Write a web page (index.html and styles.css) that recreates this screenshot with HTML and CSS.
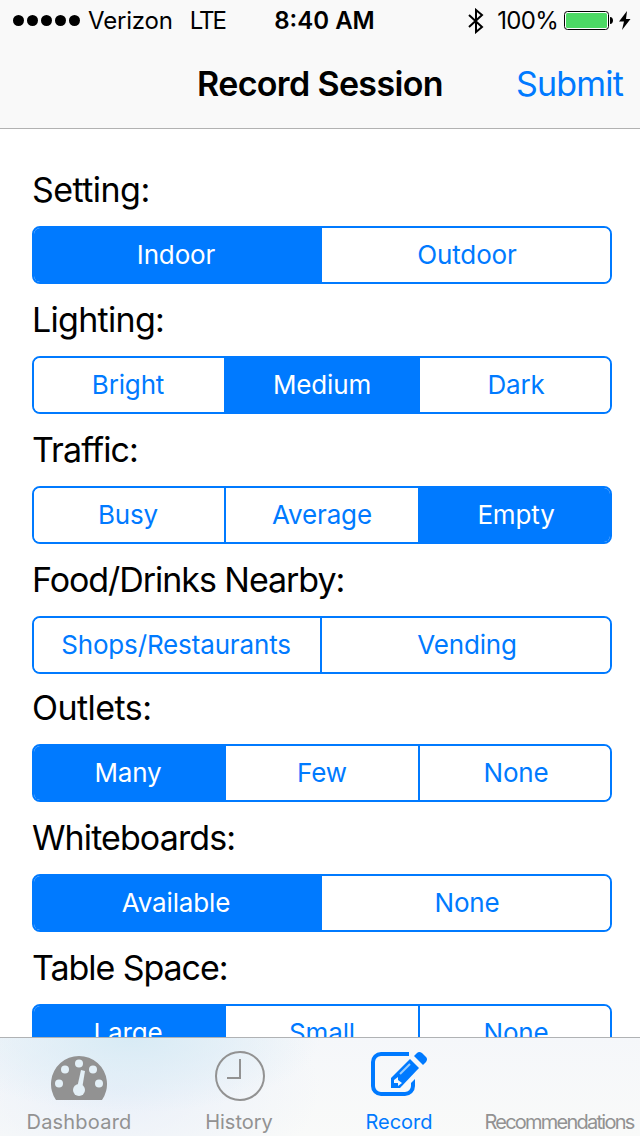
FILE: index.html
```
<!DOCTYPE html>
<html lang="en">
  <head>
    <meta charset="UTF-8" />
    <meta name="viewport" content="width=device-width, initial-scale=1.0" />
    <title>Record Session</title>
    <link rel="stylesheet" href="styles.css">
  </head>
  <body>
    <header class="top">
      <div class="status">
        <div class="status-left">
          <span class="signal"><i></i><i></i><i></i><i></i><i></i></span>
          <span class="carrier">Verizon</span>
          <span class="network">LTE</span>
        </div>
        <span class="time">8:40 AM</span>
        <div class="status-right">
          <svg class="bluetooth" width="16" height="26" viewBox="0 0 16 26">
            <path d="M1 7l13 12-6 5V2l6 5L1 19" fill="none" stroke="#000" stroke-width="2" />
          </svg>
          <span class="percent">100%</span>
          <svg class="battery" width="50" height="19" viewBox="0 0 50 19">
            <rect x="0.5" y="0.5" width="44" height="18" rx="3" fill="#fff" stroke="#000" />
            <rect x="2" y="2" width="41" height="15" rx="1.5" fill="#4cd964" />
            <path d="M46 6c4 0 4 7 0 7z" />
          </svg>
          <svg class="bolt" width="12" height="19" viewBox="0 0 12 19">
            <path d="M8 0L0 10.500h5L3 19l8.500-11H7z" />
          </svg>
        </div>
      </div>
      <nav class="navbar">
        <h1 class="title">Record Session</h1>
        <a class="submit">Submit</a>
      </nav>
    </header>

    <main class="form">
      <section class="group">
        <h2 class="label setting">Setting:</h2>
        <div class="segments two">
          <button class="selected">Indoor</button>
          <button>Outdoor</button>
        </div>
      </section>
      <section class="group">
        <h2 class="label lighting">Lighting:</h2>
        <div class="segments">
          <button>Bright</button>
          <button class="selected">Medium</button>
          <button>Dark</button>
        </div>
      </section>
      <section class="group">
        <h2 class="label traffic">Traffic:</h2>
        <div class="segments">
          <button>Busy</button>
          <button>Average</button>
          <button class="selected">Empty</button>
        </div>
      </section>
      <section class="group food-group">
        <h2 class="label food">Food/Drinks Nearby:</h2>
        <div class="segments two">
          <button>Shops/Restaurants</button>
          <button>Vending</button>
        </div>
      </section>
      <section class="group">
        <h2 class="label outlets">Outlets:</h2>
        <div class="segments">
          <button class="selected">Many</button>
          <button>Few</button>
          <button>None</button>
        </div>
      </section>
      <section class="group">
        <h2 class="label whiteboards">Whiteboards:</h2>
        <div class="segments two">
          <button class="selected">Available</button>
          <button>None</button>
        </div>
      </section>
      <section class="group">
        <h2 class="label table">Table Space:</h2>
        <div class="segments">
          <button class="selected">Large</button>
          <button>Small</button>
          <button>None</button>
        </div>
      </section>
    </main>

    <footer class="tabs">
      <a class="tab">
        <span class="icon">
          <svg width="56" height="50" viewBox="0 0 56 50">
            <path d="M5 49A28 28 0 1 1 51 49z" fill="#929292" />
            <g fill="#e4f0f7">
              <circle cx="28" cy="12.500" r="4" />
              <circle cx="14" cy="18.500" r="4" />
              <circle cx="42" cy="18.500" r="4" />
              <circle cx="8" cy="32.500" r="4" />
              <circle cx="48" cy="32.500" r="4" />
              <circle cx="28" cy="39" r="6" />
              <path d="M26 37l4-18 4 1-3 18z" />
            </g>
          </svg>
        </span>
        <span class="dashboard">Dashboard</span>
      </a>
      <a class="tab">
        <span class="icon history-icon">
          <svg width="50" height="50" viewBox="0 0 50 50" fill="none" stroke="#929292" stroke-width="2">
            <circle cx="25" cy="25" r="24" />
            <path d="M25 8v19H12" />
          </svg>
        </span>
        <span class="history">History</span>
      </a>
      <a class="tab active">
        <span class="icon">
          <svg width="56" height="50" viewBox="0 0 56 50">
            <path d="M38 3H10a8 8 0 0 0-8 8v24a8 8 0 0 0 8 8h24a8 8 0 0 0 8-8v-2" fill="none" stroke="#007aff" stroke-width="4" />
            <path d="M40 34v-2l4-4v6z" fill="#007aff" />
            <path d="M20 37V27L39 8l9 9-19 20z" fill="#007aff" />
            <path d="M43 5l3-3q2-2 5 0l4 4q2 2 0 5l-3 3z" fill="#007aff" />
            <path d="M23 29l4-3v3l4 3-4 3v-3h-4z" fill="#f6f8f9" />
            <path d="M29 23L39 13" stroke="#9accfc" stroke-width="2" />
          </svg>
        </span>
        <span class="record">Record</span>
      </a>
      <a class="tab">
        <span class="icon"></span>
        <span class="recommendations">Recommendations</span>
      </a>
    </footer>
  </body>
</html>
```
FILE: styles.css
```
* {
  box-sizing: border-box;
}

body {
  display: flex;
  flex-direction: column;
  width: 640px;
  height: 1136px;
  margin: 0;
  overflow: hidden;
  background-color: #fff;
  color: #000;
  font-family: Inter, "Liberation Sans", sans-serif;
}

.top {
  flex: none;
  height: 129px;
  background-color: #f9f9f9;
  border-bottom: 1px solid #b2b2b2;
}

.status {
  display: grid;
  grid-template-columns: 1fr auto 1fr;
  align-items: center;
  height: 40px;
  padding: 1px 9px 0 13px;
  font-size: 24px;
  white-space: nowrap;
}

.status-left,
.status-right {
  display: flex;
  align-items: center;
}

.status-right {
  justify-content: flex-end;
}

.signal {
  display: flex;
  gap: 3px;
  margin-right: 8px;
}

.signal i {
  width: 11px;
  height: 11px;
  border-radius: 50%;
  background-color: #000;
}

.carrier {
  margin-right: 17px;
  letter-spacing: -0.2px;
}

.network {
  letter-spacing: -2px;
}

.time {
  margin-left: 5px;
  font-weight: 600;
}

.bluetooth {
  margin-right: 13px;
}

.percent {
  letter-spacing: -0.7px;
}

.battery {
  margin: 0 5px 0 6px;
}

.navbar {
  display: grid;
  grid-template-columns: 1fr auto 1fr;
  align-items: center;
  height: 86px;
  padding: 0 17px;
  font-size: 34px;
}

.title {
  grid-column: 2;
  margin: 0;
  font-size: 34px;
  font-weight: 600;
  letter-spacing: -0.65px;
}

.submit {
  justify-self: end;
  color: #007aff;
  letter-spacing: -0.8px;
}

.form {
  flex: 1;
  min-height: 0;
  padding: 41px 28px 0 32px;
  overflow: hidden;
}

.group {
  margin-bottom: 16px;
}

.food-group {
  margin-bottom: 14px;
}

.label {
  margin: 0 0 16px;
  font-size: 34px;
  font-weight: 400;
  line-height: 40px;
  letter-spacing: -0.9px;
}

.setting,
.outlets {
  letter-spacing: -0.55px;
}

.lighting {
  letter-spacing: -0.7px;
}

.food,
.table {
  letter-spacing: -1.05px;
}

.segments {
  display: grid;
  grid-template-columns: 190px 194px 192px;
  height: 58px;
  border: 2px solid #007aff;
  border-radius: 8px;
  overflow: hidden;
}

.two {
  grid-template-columns: 286px 290px;
}

.segments button {
  padding: 0 0 2px;
  border: 0;
  background-color: #fff;
  color: #007aff;
  font-family: inherit;
  font-size: 26px;
  letter-spacing: -0.15px;
}

.segments button + button {
  border-left: 2px solid #007aff;
}

.segments button:first-child {
  padding-right: 2px;
}

.segments button:last-child {
  padding-left: 2px;
}

.segments .selected {
  background-color: #007aff;
  color: #fff;
}

.tabs {
  display: grid;
  grid-template-columns: 158px 162px 158px 162px;
  flex: none;
  height: 99px;
  border-top: 1px solid #b0b2b4;
  background:
    radial-gradient(ellipse 190px 75px at 130px 0, #d8ebf5, transparent),
    radial-gradient(ellipse 200px 110px at 120px 50px, #eaf0f9, transparent),
    linear-gradient(#f5f7fa, #f9faf9);
}

.tab {
  display: flex;
  flex-direction: column;
  align-items: center;
  padding-top: 13px;
  color: #929292;
  font-size: 20px;
  line-height: 24px;
  white-space: nowrap;
}

.icon {
  height: 59px;
}

.history-icon {
  padding-left: 2px;
}

.dashboard {
  letter-spacing: 0.2px;
}

.recommendations {
  letter-spacing: -1.75px;
}

.active {
  color: #007aff;
}
```
